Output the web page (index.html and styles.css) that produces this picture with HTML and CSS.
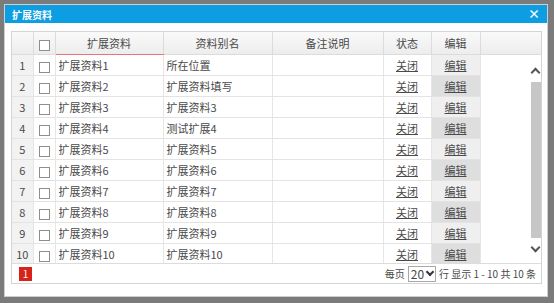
FILE: index.html
```html
<!DOCTYPE html>
<html lang="zh-CN">
<head>
    <meta charset="UTF-8">
    <title>扩展资料</title>
    <link rel="stylesheet" href="styles.css">
</head>
<body>

    <div class="dialog">
        <div class="dialog-title">
            <span>扩展资料</span>
            <span class="close">&times;</span>
        </div>
        <div class="dialog-body">
            <div class="grid">
                <table class="grid-head">
                    <colgroup>
                        <col class="c-num"><col class="c-chk"><col class="c-name"><col class="c-alias">
                        <col class="c-note"><col class="c-state"><col class="c-edit"><col>
                    </colgroup>
                    <tr>
                        <th></th>
                        <th><span class="chk"></span></th>
                        <th class="sorted">扩展资料</th>
                        <th>资料别名</th>
                        <th>备注说明</th>
                        <th>状态</th>
                        <th>编辑</th>
                        <th></th>
                    </tr>
                </table>
                <div class="grid-view">
                    <table class="grid-body">
                        <colgroup>
                            <col class="c-num"><col class="c-chk"><col class="c-name"><col class="c-alias">
                            <col class="c-note"><col class="c-state"><col class="c-edit"><col>
                        </colgroup>
                        <tbody id="rows"></tbody>
                    </table>
                    <div class="scrollbar">
                        <span class="arrow up"></span>
                        <div class="thumb"></div>
                        <span class="arrow down"></span>
                    </div>
                </div>
                <div class="grid-foot">
                    <span class="page-no">1</span>
                    <div class="pager">
                        每页
                        <span class="page-size">20<span class="caret"></span></span>
                        行 显示 1 - 10 共 10 条
                    </div>
                </div>
            </div>
        </div>
    </div>

    <script>
        const aliases = ["所在位置", "扩展资料填写", "扩展资料3", "测试扩展4", "扩展资料5",
                         "扩展资料6", "扩展资料7", "扩展资料8", "扩展资料9", "扩展资料10"];
        const tbody = document.getElementById("rows");

        aliases.forEach((alias, i) => {
            const row = document.createElement("tr");
            row.innerHTML =
                `<td class="num">${i + 1}</td>` +
                `<td class="center"><span class="chk"></span></td>` +
                `<td>扩展资料${i + 1}</td>` +
                `<td>${alias}</td>` +
                `<td></td>` +
                `<td class="center"><a>关闭</a></td>` +
                `<td class="center edit"><a>编辑</a></td>` +
                `<td class="filler"></td>`;
            tbody.appendChild(row);
        });
    </script>

</body>
</html>
```

FILE: styles.css
```css
body {
    margin: 0;
    background-color: #7b7b7b;
    font-family: "Noto Sans CJK SC", "Noto Sans", sans-serif;
    font-size: 11px;
    color: #4a4a4a;
}
.dialog {
    margin: 4px 0 0 4px;
    width: 542px;
    height: 291px;
    border: 1px solid #cfcfcf;
    background-color: #fff;
}
.dialog-title {
    height: 18px;
    background-color: #0d9de2;
    color: #fff;
    font-size: 10px;
    font-weight: bold;
    display: flex;
    justify-content: space-between;
    align-items: center;
    padding: 0 7px 0 7px;
}
.close {
    font-size: 12px;
    line-height: 1;
}
.dialog-body {
    padding: 8px 0 0 6px;
}
.grid {
    width: 529px;
    border: 1px solid #d4d4d4;
}
table {
    border-collapse: collapse;
    table-layout: fixed;
}
.grid-head {
    width: 529px;
}
.c-num { width: 21px; }
.c-chk { width: 22px; }
.c-name { width: 108px; }
.c-alias { width: 109px; }
.c-note { width: 111px; }
.c-state { width: 48px; }
.c-edit { width: 49px; }
th {
    height: 22px;
    padding: 0;
    font-weight: normal;
    background: linear-gradient(#f9f9f9, #ededed);
    border-right: 1px solid #dcdcdc;
    border-bottom: 1px solid #dcdcdc;
}
th:last-child {
    border-right: none;
}
th.sorted {
    border-bottom: 1px solid #e9737a;
}
.chk {
    display: inline-block;
    width: 9px;
    height: 9px;
    border: 1px solid #8e8e8e;
    background-color: #fff;
    vertical-align: middle;
}
.grid-view {
    display: flex;
    height: 208px;
    overflow: hidden;
}
.grid-body {
    width: 518px;
    flex: none;
    align-self: flex-start;
}
td {
    height: 20px;
    padding: 0 0 0 3px;
    border-right: 1px solid #e6e6e6;
    border-bottom: 1px solid #e3e3e3;
    white-space: nowrap;
}
td.center {
    text-align: center;
    padding: 0;
}
td.num {
    text-align: center;
    padding: 0;
    background-color: #f2f2f2;
}
td.edit {
    background-color: #efefef;
}
tr:nth-child(even) td.edit {
    background-color: #dedede;
}
td.filler {
    border: none;
}
a {
    text-decoration: underline;
    color: #4a4a4a;
}
.scrollbar {
    width: 11px;
    flex: none;
    display: flex;
    flex-direction: column;
    align-items: center;
    padding-top: 12px;
}
.arrow {
    width: 5px;
    height: 5px;
    border-left: 2px solid #555;
    border-top: 2px solid #555;
}
.arrow.up {
    transform: rotate(45deg);
    margin-top: 2px;
}
.arrow.down {
    transform: rotate(225deg);
    margin-top: 6px;
}
.thumb {
    width: 10px;
    height: 156px;
    margin-top: 6px;
    background-color: #c6c6c6;
}
.grid-foot {
    height: 19px;
    border-top: 1px solid #dcdcdc;
    display: flex;
    justify-content: space-between;
    align-items: center;
    padding: 0 5px 0 7px;
}
.page-no {
    width: 13px;
    height: 14px;
    background-color: #d8231b;
    color: #fff;
    font-size: 10px;
    line-height: 14px;
    text-align: center;
}
.pager {
    display: flex;
    align-items: center;
    gap: 3px;
    font-size: 10px;
}
.page-size {
    display: inline-flex;
    align-items: center;
    gap: 3px;
    height: 14px;
    padding: 0 2px;
    border: 1px solid #a9a9a9;
    font-size: 12px;
}
.caret {
    width: 4px;
    height: 4px;
    border-right: 2px solid #333;
    border-bottom: 2px solid #333;
    transform: rotate(45deg);
    margin-top: -3px;
}
```
